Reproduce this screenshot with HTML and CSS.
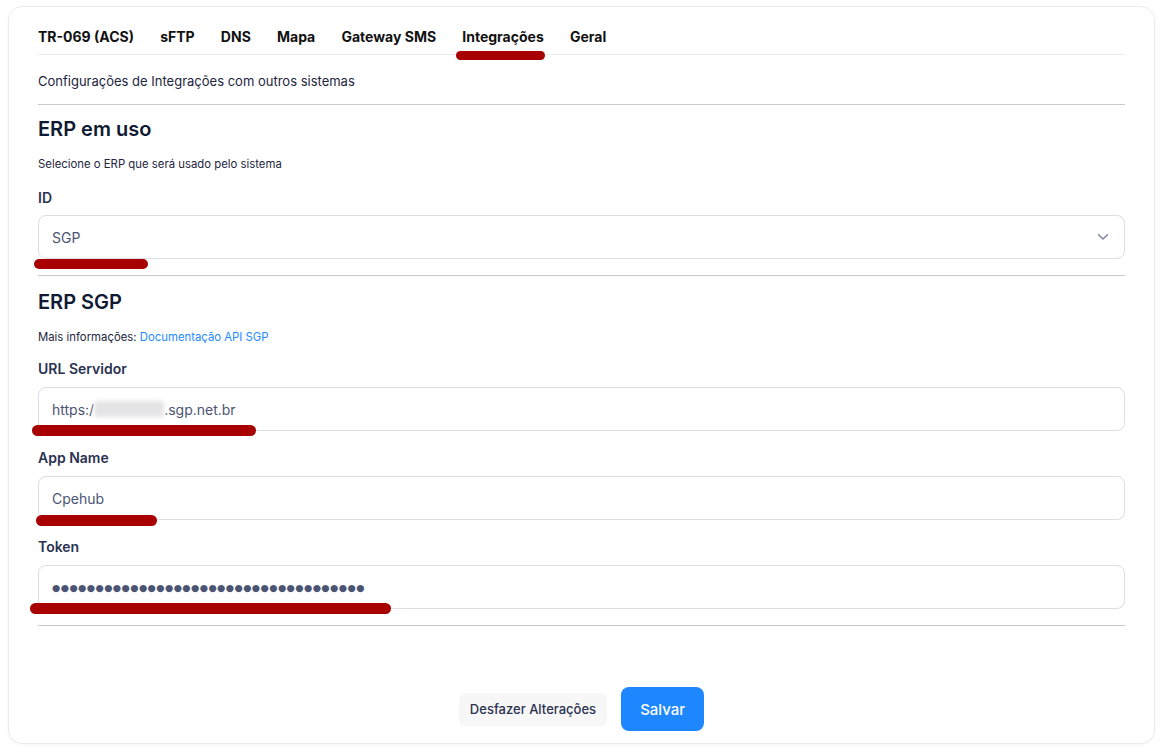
FILE: index.html
```html
<!DOCTYPE html>
<html lang="pt">
<head>
<meta charset="utf-8">
<link rel="stylesheet" href="styles.css">
</head>
<body>
<div class="card">
  <nav class="tabs">
    <span class="tab">TR-069 (ACS)</span>
    <span class="tab">sFTP</span>
    <span class="tab">DNS</span>
    <span class="tab">Mapa</span>
    <span class="tab">Gateway SMS</span>
    <span class="tab">Integrações</span>
    <span class="tab">Geral</span>
  </nav>
  <p class="desc">Configurações de Integrações com outros sistemas</p>
  <hr class="div div-top">

  <h2 class="h">ERP em uso</h2>
  <p class="small">Selecione o ERP que será usado pelo sistema</p>
  <label class="lbl lbl-first">ID</label>
  <div class="field select">
    <span>SGP</span>
    <svg class="chev" width="12" height="8" viewBox="0 0 12 8"><path d="M1.5 1.8 L6 6 L10.5 1.8" fill="none" stroke="#7b8197" stroke-width="1.4" stroke-linecap="round" stroke-linejoin="round"/></svg>
  </div>
  <hr class="div div-mid">

  <h2 class="h h2">ERP SGP</h2>
  <p class="small">Mais informações: <a class="link">Documentação API SGP</a></p>
  <label class="lbl lbl-first2">URL Servidor</label>
  <div class="field"><span>https:/</span><span class="blur"></span><span>.sgp.net.br</span></div>
  <label class="lbl lbl-next">App Name</label>
  <div class="field"><span>Cpehub</span></div>
  <label class="lbl lbl-next">Token</label>
  <div class="field"><span class="dots">●●●●●●●●●●●●●●●●●●●●●●●●●●●●●●●●●●●●</span></div>
  <hr class="div div-bot">

  <div class="actions">
    <button class="btn btn-ghost">Desfazer Alterações</button>
    <button class="btn btn-primary">Salvar</button>
  </div>

  <span class="mark m-tab"></span>
  <span class="mark m-id"></span>
  <span class="mark m-url"></span>
  <span class="mark m-app"></span>
  <span class="mark m-token"></span>
</div>
</body>
</html>
```
FILE: styles.css
```css
* { box-sizing: border-box; }
html, body { margin: 0; padding: 0; background: #ffffff; }
body {
  font-family: Inter, "Noto Sans", sans-serif;
  padding: 6px 7px 6px 8px;
}
.card {
  position: relative;
  border: 1px solid #ececef;
  border-radius: 14px;
  background: #fff;
  height: 738px;
  padding: 15px 29px 0 29px;
  box-shadow: 0 1px 3px rgba(0,0,0,0.04);
}
.tabs {
  display: flex;
  gap: 26.2px;
  border-bottom: 1px solid #ececef;
  padding: 5px 0 7px 0;
}
.tab {
  font-size: 14px;
  font-weight: 700;
  line-height: 20px;
  color: #111111;
}
.desc {
  margin: 16px 0 0 0;
  font-size: 13px;
  line-height: 20px;
  color: #1d2540;
}
.div {
  border: 0;
  height: 1px;
  background: #c9c9d3;
  margin: 0;
}
.div-top { margin-top: 13px; }
.div-mid { margin-top: 16px; }
.div-bot { margin-top: 16px; }
.h {
  margin: 10px 0 0 0;
  font-size: 20px;
  font-weight: 600;
  line-height: 28px;
  color: #111a33;
}
.h2 { margin-top: 12px; }
.small {
  margin: 13px 0 0 0;
  font-size: 11.35px;
  line-height: 16px;
  color: #1d2540;
}
.link { color: #1e8aff; text-decoration: none; }
.lbl {
  display: block;
  margin-top: 16px;
  font-size: 14px;
  font-weight: 600;
  line-height: 20px;
  color: #2a3250;
}
.lbl-first { margin-top: 16px; }
.lbl-first2 { margin-top: 14px; }
.lbl-next { margin-top: 17px; }
.field {
  margin-top: 8px;
  height: 44px;
  border: 1px solid #dcdde6;
  border-radius: 8px;
  display: flex;
  align-items: center;
  padding: 0 13px;
  font-size: 14px;
  color: #4b5473;
}
.select { margin-top: 7px; justify-content: space-between; padding-right: 15px; }
.chev { display: block; }
.blur {
  display: inline-block;
  width: 70px;
  height: 16px;
  background: #e4e4e6;
  filter: blur(2px);
  border-radius: 3px;
}
.dots {
  font-family: "DejaVu Sans", sans-serif;
  font-size: 9.5px;
  letter-spacing: 0.4px;
  color: #4b5473;
}
.actions {
  display: flex;
  justify-content: center;
  align-items: center;
  gap: 14px;
  margin-top: 61px;
}
.btn {
  font-family: Inter, "Noto Sans", sans-serif;
  border: 0;
  cursor: pointer;
}
.btn-ghost {
  background: #f7f7f8;
  color: #2a3250;
  font-size: 13px;
  font-weight: 500;
  height: 33px;
  padding: 0 11px;
  border-radius: 6px;
}
.btn-primary {
  background: #1e87ff;
  color: #fff;
  font-size: 15px;
  font-weight: 500;
  height: 44px;
  width: 83px;
  border-radius: 8px;
}
.mark {
  position: absolute;
  background: #a80000;
  border-radius: 6px;
}
.m-tab { left: 447px; top: 44px; width: 89px; height: 9px; }
.m-id { left: 25px; top: 252px; width: 114px; height: 10px; }
.m-url { left: 23px; top: 418px; width: 224px; height: 11px; }
.m-app { left: 27px; top: 508px; width: 121px; height: 11px; }
.m-token { left: 21px; top: 596px; width: 361px; height: 11px; }
```
